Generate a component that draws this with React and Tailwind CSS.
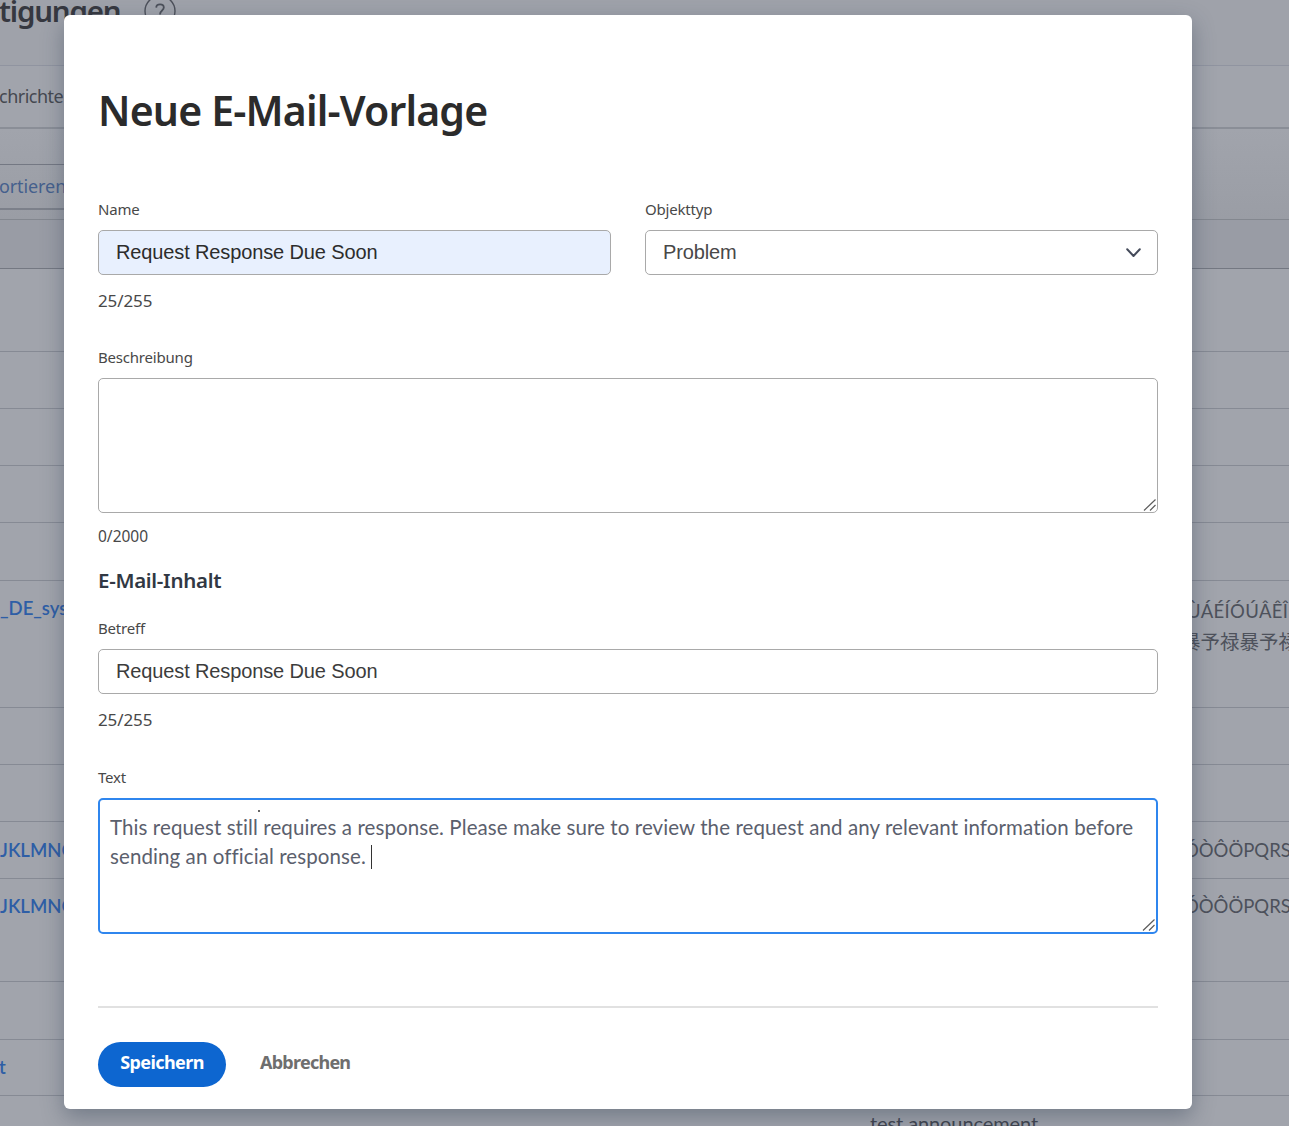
import React from "react";

const label =
  "block h-5 font-['Noto_Sans',sans-serif] text-[15px] leading-5 tracking-[-0.2px] text-[#484848]";
const counter =
  "h-6 font-['Noto_Sans',sans-serif] text-[17px] leading-6 tracking-[-0.1px] text-[#484848]";
const field =
  "flex h-[45px] items-center rounded-[5px] border border-[#a9a9a9] px-[17px] pb-[2px] font-['Liberation_Sans',sans-serif] text-[20px] tracking-[-0.13px]";

function ResizeGrip() {
  return (
    <svg className="absolute -right-px -bottom-px size-4" viewBox="0 0 16 16" fill="none" stroke="#5c5c5c" strokeWidth="1.2">
      <path d="M2 13.5 L13.5 2.5 M8 13.5 L13.5 8" />
    </svg>
  );
}

function Row({ className, left, children }) {
  return (
    <div className={`flex shrink-0 justify-between overflow-hidden border-b border-[#868a94] ${className}`}>
      <div className="w-[72px] overflow-hidden whitespace-nowrap text-[18.5px] font-semibold text-[#2e5ea6]">{left}</div>
      <div className="w-[101px] overflow-hidden whitespace-nowrap text-[18.5px] text-[#4d515b]">{children}</div>
    </div>
  );
}

function Page() {
  return (
    <div className="flex h-full flex-col bg-[#a1a4ac] font-['Lato','Noto_Sans_CJK_JP',sans-serif]">
      <header className="flex h-[66px] shrink-0 border-b border-[#9094a0] bg-[#9fa2aa] font-['Noto_Sans',sans-serif]">
        <div className="-mt-[9px] -ml-px w-[120px] text-[29.5px] leading-[40px] font-semibold tracking-[-1.2px] whitespace-nowrap text-[#363840]">
          tigungen
        </div>
        <svg className="-mt-[5px] ml-[25px] size-8 shrink-0" viewBox="0 0 32 32" fill="none" stroke="#4c505a" strokeWidth="1.4">
          <circle cx="16" cy="16" r="15" />
          <path d="M12.2 12.6 C12.4 8.4 19.8 8.4 19.8 12.6 C19.8 15.6 16 15.4 16 19.4" strokeWidth="1.8" />
          <path d="M16 22v2" strokeWidth="1.8" />
        </svg>
      </header>
      <nav className="flex h-[63px] shrink-0 items-center overflow-hidden border-b-2 border-[#8a8e97] font-['Noto_Sans',sans-serif] text-[18px] tracking-[-0.5px] text-[#454850]">
        <span className="-ml-px">chrichten</span>
      </nav>
      <div className="h-[91px] shrink-0 border-b border-[#83878f] bg-linear-to-b from-[#a1a4ac] to-[#9a9da5]">
        <div className="mt-[35px] flex h-[46px] w-[90px] items-center border-t border-b-2 border-t-[#747883] border-b-[#7c808a] font-['Noto_Sans',sans-serif] text-[18px] tracking-[-0.1px] text-[#45608d]">
          <span className="-ml-px">ortieren</span>
        </div>
      </div>
      <div className="h-[49px] shrink-0 border-b border-[#747882] bg-[#999ca5]" />
      <Row className="h-[83px]" />
      <Row className="h-[57px]" />
      <Row className="h-[57px]" />
      <Row className="h-[57px]" />
      <Row className="h-[58px]" />
      <Row className="h-[127px]" left={<div className="pt-[13px] leading-7">_DE_sys</div>}>
        <div className="pt-[15px] leading-[31px]">
          <div className="-ml-[1px] tracking-[0.35px]">ÙÁÉÍÓÚÂÊÎ</div>
          <div className="-mt-px -ml-[7px] text-[19.5px]">暴予禄暴予禄</div>
        </div>
      </Row>
      <Row className="h-[57px]" />
      <Row className="h-[57px]" />
      <Row className="h-[57px]" left={<div className="pt-[14px] leading-7">JKLMNO</div>}>
        <div className="-ml-[4px] pt-[14px] leading-7">ÓÒÔÖPQRS</div>
      </Row>
      <Row className="h-[103px]" left={<div className="pt-[13px] leading-7">JKLMNO</div>}>
        <div className="-ml-[4px] pt-[13px] leading-7">ÓÒÔÖPQRS</div>
      </Row>
      <Row className="h-[58px]" />
      <Row className="h-[56px]" left={<div className="-ml-px pt-[13px] leading-7">t</div>} />
      <div className="h-[31px] overflow-hidden pt-[13px] pl-[870px] text-[20px] leading-7 tracking-[-0.1px] text-[#40444e]">test announcement</div>
    </div>
  );
}

function Dialog() {
  return (
    <section className="absolute top-[15px] left-[64px] flex h-[1094px] w-[1128px] flex-col rounded-[6px] bg-white px-[34px] shadow-[0_8px_22px_rgba(45,60,80,0.4)]">
      <h1 className="mt-[65px] h-[60px] font-['Noto_Sans',sans-serif] text-[41px] leading-[60px] font-semibold tracking-[-0.83px] text-[#2b2b2b]">
        Neue E-Mail-Vorlage
      </h1>
      <div className="mt-[59px] grid grid-cols-2 gap-[34px]">
        <div>
          <span className={label}>Name</span>
          <div className={`${field} mt-[11px] bg-[#e8f0fe] text-[#2c2c2c]`}>Request Response Due Soon</div>
          <div className={`${counter} mt-[14px]`}>25/255</div>
        </div>
        <div>
          <span className={label}>Objekttyp</span>
          <div className={`${field} mt-[11px] justify-between pr-[16px] text-[#484848]`}>
            Problem
            <svg className="mt-[3px] h-[10px] w-[15px]" viewBox="0 0 15 10" fill="none" stroke="#454b5b" strokeWidth="2" strokeLinecap="round" strokeLinejoin="round">
              <path d="M1.2 1.2 L7.5 8 L13.8 1.2" />
            </svg>
          </div>
        </div>
      </div>
      <span className={`${label} mt-[34px]`}>Beschreibung</span>
      <div className="relative mt-[11px] h-[135px] rounded-[5px] border border-[#a9a9a9]">
        <ResizeGrip />
      </div>
      <div className="mt-[11px] h-6 font-['Noto_Sans',sans-serif] text-[15.5px] leading-6 text-[#484848]">0/2000</div>
      <h2 className="mt-[18px] h-7 font-['Noto_Sans',sans-serif] text-[20.5px] leading-7 font-semibold tracking-[-0.3px] text-[#313843]">
        E-Mail-Inhalt
      </h2>
      <span className={`${label} mt-[24px]`}>Betreff</span>
      <div className={`${field} mt-[11px] text-[#3c3c3c]`}>Request Response Due Soon</div>
      <div className={`${counter} mt-[14px]`}>25/255</div>
      <span className={`${label} mt-[35px]`}>Text</span>
      <div className="relative mt-[11px] h-[136px] rounded-[5px] border-2 border-[#2f86ee] px-[10px] pt-[13px] font-['Lato',sans-serif] text-[20.5px] leading-[29px] tracking-[0.09px] whitespace-nowrap text-[#5b606d]">
        <span className="absolute top-[10px] left-[158px] size-[2px] bg-[#666]" />
        <p>This request still requires a response. Please make sure to review the request and any relevant information before</p>
        <p className="flex items-center">
          sending an official response.
          <span className="ml-[5px] h-6 w-px bg-[#333]" />
        </p>
        <ResizeGrip />
      </div>
      <hr className="mt-[72px] border-t-2 border-[#e1e1e1]" />
      <div className="mt-[34px] flex items-center font-['Noto_Sans',sans-serif] text-[18px] font-bold tracking-[-0.6px]">
        <button className="flex h-[45px] w-[128px] justify-center rounded-full bg-[#0d66d0] pt-[7px] text-white">Speichern</button>
        <button className="-mt-[4px] ml-[34px] tracking-[-0.75px] text-[#6e6e6e]">Abbrechen</button>
      </div>
    </section>
  );
}

export default function App() {
  return (
    <main className="relative h-[1126px] w-[1289px] overflow-hidden">
      <Page />
      <Dialog />
    </main>
  );
}
